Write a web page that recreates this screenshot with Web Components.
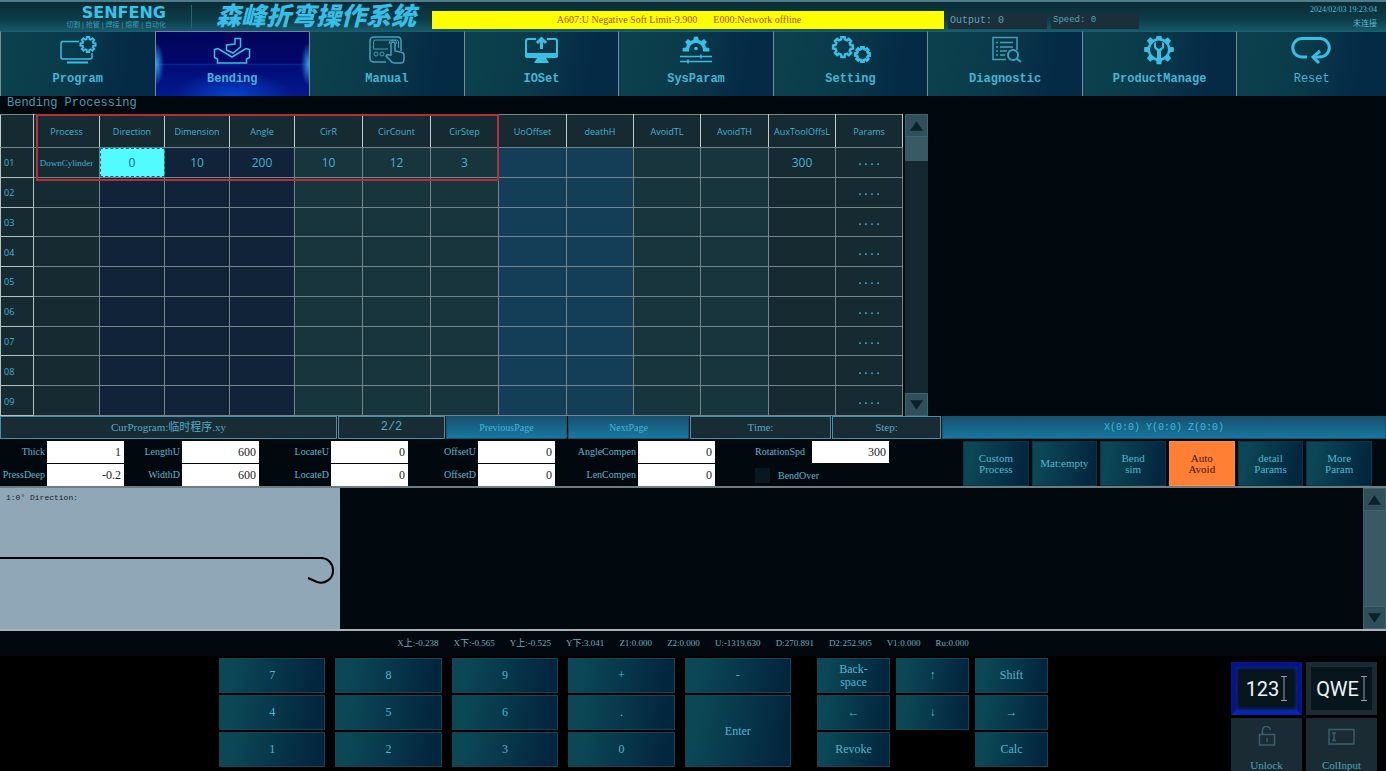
<!DOCTYPE html>
<html lang="en">
<head>
<meta charset="utf-8">
<title>Bending Processing</title>
<style>
    body {
        margin: 0;
        background: #02090e;
        color: #45a9c9;
        font-family: "Liberation Serif", "Noto Sans CJK SC", serif;
    }
</style>
</head>
<body>

<bending-app></bending-app>

<script>
// outline of a gear with n teeth, as svg path data
function gear(cx, cy, inner, outer, n) {
    const step = Math.PI * 2 / n;
    const points = [];

    for (let i = 0; i < n; i++) {
        const a = i * step - Math.PI / 2;
        [[-0.32, inner], [-0.2, outer], [0.2, outer], [0.32, inner]].forEach(([t, r]) => {
            points.push((cx + r * Math.cos(a + t * step)).toFixed(2) + ' ' + (cy + r * Math.sin(a + t * step)).toFixed(2));
        });
    }

    return 'M' + points.join('L') + 'Z';
}

const icons = {
    program: `
        <path d="M22 5.5H6q-2 0-2 2V21q0 2 2 2h27q2 0 2-2v-4"/>
        <path d="M10 26.5h21" stroke-width="2"/>
        <path d="${gear(31, 8.5, 5.6, 7.6, 8)}" stroke-width="2"/>`,
    bending: `
        <path d="M2.5 13.5L6 12.5L20 21L34 12.5L37.5 13.5V21.5L34.5 23V27H5.5V23L2.5 21.5Z"/>
        <path d="M23 2.5H28.5V11L21 17L14.5 14V9L23 8Z"/>`,
    manual: `
        <path d="M20 26H8q-4 0-4-4V5q0-4 4-4h24q3 0 3 4v10"/>
        <path d="M22 13H7.500V6q0-2 2-2h21q2 0 2 2v6" stroke-width="1"/>
        <circle cx="10" cy="18" r="2" stroke-width="1"/><circle cx="16" cy="18" r="2" stroke-width="1"/>
        <path d="M25 19V8a2 2 0 0 1 4 0v7l7 1.500q2 .5 2 3V23q0 4-3 4h-7q-2 0-4-3l-4-4q1-2 3-1z"/>
        <path d="M23 8a4 4 0 0 1 8 0" stroke-width="1"/>`,
    ioset: `
        <path d="M15 3H7q-2 0-2 2v15h31V5q0-2-2-2h-8" stroke-width="2"/>
        <path d="M4 17h33v3q0 2-2 2H25l3 5H13l3-5H6q-2 0-2-2z" fill="currentColor" stroke="none"/>
        <path d="M20.500 13V4M16 7l4.500-4.500L25 7" stroke-width="3"/>`,
    sysparam: `
        <clipPath id="half"><path d="M0 0H40V15.500H0Z"/></clipPath>
        <path d="${gear(20, 14, 10.5, 13.5, 8)}M27 14a7 7 0 1 0-14 0a7 7 0 1 0 14 0Z" fill="currentColor" stroke="none" fill-rule="evenodd" clip-path="url(#half)"/>
        <circle cx="20" cy="12.500" r="1.800" fill="currentColor" stroke="none"/>
        <path d="M4 20.500H36M4 25.500H36M25 18.500v4M12 23.500v4"/>`,
    setting: `
        <path d="${gear(13, 11, 7.8, 10, 8)}" stroke-width="2.500"/>
        <path d="${gear(32.5, 18.5, 5.6, 7.4, 8)}" stroke-width="2.500"/>`,
    diagnostic: `
        <path d="M21 23.500H8V1.500H32V14"/>
        <path d="M15 6.500h13M15 11h13M15 15h7M15 19h5M11 6.500h2M11 11h2M11 15h2M11 19h2"/>
        <circle cx="28" cy="19" r="5" stroke-width="2"/><path d="M31.500 22.500L36 26" stroke-width="2"/>`,
    product: `
        <path d="${gear(20, 13.5, 11.5, 15, 8)}M29 13.500a9 9 0 1 0-18 0a9 9 0 1 0 18 0Z" fill="currentColor" stroke="none" fill-rule="evenodd"/>
        <path d="M15 7v5l3 3v12h4V15l3-3V7l-2-1v5l-3 2-3-2V6z" fill="currentColor" stroke="none"/>`,
    reset: `
        <path d="M16 21H11A9 9 0 0 1 11 2.500H29A9 9 0 0 1 29 21H22" stroke-width="3"/>
        <path d="M29 15L22 21L28 27" stroke-width="3"/>`
};

class BendingApp extends HTMLElement {

    constructor() {
        super();
        this.shadow = this.attachShadow({ mode: 'open' });
    }

    connectedCallback() {
        this.render();
    }

    render() {
        this.shadow.innerHTML =
        `
        <style>
            :host {
                display: flex;
                flex-direction: column;
                height: 100vh;
                overflow: hidden;
            }

            h1 {
                margin: 0;
                padding: 0 7px;
                font: 12px/14px "Liberation Mono", monospace;
                height: 18px;
                color: #5098ae;
            }

            .preview {
                flex: 1;
                min-height: 0;
            }
        </style>

        <top-bar></top-bar>
        <main-nav></main-nav>
        <h1>Bending Processing</h1>
        <process-table></process-table>
        <program-bar></program-bar>
        <param-panel></param-panel>
        <bend-preview class="preview"></bend-preview>
        <axis-bar></axis-bar>
        <key-pad></key-pad>
        `;
    }
}

class TopBar extends HTMLElement {

    constructor() {
        super();
        this.shadow = this.attachShadow({ mode: 'open' });
    }

    connectedCallback() {
        this.render();
    }

    render() {
        this.shadow.innerHTML =
        `
        <style>
            :host {
                display: grid;
                grid-template-columns: 192fr 240fr 512fr 103fr 92fr 247fr;
                box-sizing: border-box;
                height: 31px;
                border-top: 2px solid #507d8b;
                background: linear-gradient(#0a2b35, #0b3c48 60%, #17596a);
            }

            .brand {
                display: flex;
                flex-direction: column;
                align-items: flex-end;
                margin: 3px 0 2px;
                padding-right: 25px;
                border-right: 1px solid #276473;
                color: #38c4e8;
            }

            .brand b {
                font: bold 16px/16px "DejaVu Sans", sans-serif;
            }

            .brand small {
                font: 7px/8px "Liberation Sans", "Noto Sans CJK SC", sans-serif;
                color: #3c9db6;
                white-space: nowrap;
            }

            .system {
                padding-left: 24px;
                font: italic 900 25px/29px "Liberation Sans", "Noto Sans CJK SC", sans-serif;
                color: #36bfe6;
                white-space: nowrap;
            }

            .alarm {
                display: flex;
                justify-content: center;
                gap: 16px;
                margin: 9px 0 2px;
                padding-right: 18px;
                background: #ff0;
                color: #a94c12;
                font-size: 10px;
                line-height: 18px;
            }

            .meter {
                margin: 11px 0 2px 4px;
                padding-left: 2px;
                background: #1a2f39;
                font: 10px/15px "Liberation Mono", monospace;
                color: #5ba5b9;
            }

            .meter.small {
                font-size: 9px;
            }

            .clock {
                padding: 1px 9px 0;
                text-align: right;
                font-size: 8px;
                line-height: 14px;
                color: #5eb8cf;
            }
        </style>

        <div class="brand"><b>SENFENG</b><small>切割 | 抢管 | 焊接 | 熔覆 | 自动化</small></div>
        <div class="system">森峰折弯操作系统</div>
        <div class="alarm"><span>A607:U Negative Soft Limit-9.900</span><span>E000:Network offline</span></div>
        <div class="meter">Output: 0</div>
        <div class="meter small">Speed: 0</div>
        <div class="clock">2024/02/03 19:23:04<br>未连接</div>
        `;
    }
}

class MainNav extends HTMLElement {

    constructor() {
        super();
        this.shadow = this.attachShadow({ mode: 'open' });
    }

    connectedCallback() {
        this.render();
    }

    render() {
        this.shadow.innerHTML =
        `
        <style>
            :host {
                display: block;
            }

            nav {
                display: grid;
                grid-template-columns: repeat(8, 154fr) 149fr;
            }
        </style>

        <nav>
            <nav-item icon="program">Program</nav-item>
            <nav-item icon="bending" active>Bending</nav-item>
            <nav-item icon="manual">Manual</nav-item>
            <nav-item icon="ioset">IOSet</nav-item>
            <nav-item icon="sysparam">SysParam</nav-item>
            <nav-item icon="setting">Setting</nav-item>
            <nav-item icon="diagnostic">Diagnostic</nav-item>
            <nav-item icon="product">ProductManage</nav-item>
            <nav-item icon="reset" plain>Reset</nav-item>
        </nav>
        `;
    }
}

class NavItem extends HTMLElement {

    constructor() {
        super();
        this.shadow = this.attachShadow({ mode: 'open' });
    }

    connectedCallback() {
        this.render();
    }

    render() {
        this.shadow.innerHTML =
        `
        <style>
            :host {
                display: block;
                min-width: 0;
            }

            button {
                display: flex;
                flex-direction: column;
                align-items: center;
                gap: 6px;
                box-sizing: border-box;
                width: 100%;
                height: 65px;
                margin: 0;
                padding: 4px 0 0;
                border: 0;
                border-top: 1px solid #176071;
                border-left: 1px solid #718f95;
                background: linear-gradient(100deg, #0b404c 10%, #0a3a4a 45%, #052a46 80%);
                color: #38c0e4;
                font: bold 12px/16px "Liberation Mono", monospace;
            }

            :host([plain]) button {
                font-weight: normal;
            }

            :host([active]) button {
                border-top-color: #6d7fa8;
                background:
                    radial-gradient(ellipse 8px 22px at 0 50%, #34a4f0, transparent),
                    radial-gradient(ellipse 8px 22px at 100% 50%, #34a4f0, transparent),
                    radial-gradient(ellipse 60px 24px at 50% 100%, #0743cf, transparent),
                    linear-gradient(#02055a, #03066c 49%, #0a2a94 50%, #020d78 53%, #03198c);
            }

            svg {
                width: 41px;
                height: 29px;
                fill: none;
                stroke: currentColor;
            }

            :host([icon="manual"]) svg,
            :host([icon="diagnostic"]) svg {
                color: #419fbb;
            }

            span {
                color: #46b4d2;
            }
        </style>

        <button type="button">
            <svg viewBox="0 0 41 29" stroke-width="1.5" aria-hidden="true">${icons[this.getAttribute('icon')]}</svg>
            <span><slot></slot></span>
        </button>
        `;
    }
}

class ScrollRail extends HTMLElement {

    constructor() {
        super();
        this.shadow = this.attachShadow({ mode: 'open' });
    }

    connectedCallback() {
        this.render();
    }

    render() {
        this.shadow.innerHTML =
        `
        <style>
            :host {
                display: flex;
                flex-direction: column;
                width: 23px;
                background: #15282f;
            }

            button {
                height: 23px;
                margin: 0;
                padding: 0;
                border: 1px solid #3b6570;
                background: #2f4f5a;
                line-height: 0;
            }

            svg {
                width: 13px;
                height: 10px;
                fill: #0d2129;
            }

            .track {
                flex: 1;
            }

            .thumb {
                height: 24px;
                background: #395a64;
            }

            :host([full]) .thumb {
                height: 100%;
            }
        </style>

        <button type="button" aria-label="Up"><svg viewBox="0 0 15 11"><path d="M7.500 0L15 11H0Z"/></svg></button>
        <div class="track"><div class="thumb"></div></div>
        <button type="button" aria-label="Down"><svg viewBox="0 0 15 11"><path d="M7.500 11L15 0H0Z"/></svg></button>
        `;
    }
}

class ProcessTable extends HTMLElement {

    constructor() {
        super();
        this.shadow = this.attachShadow({ mode: 'open' });
        this.columns = ['Process', 'Direction', 'Dimension', 'Angle', 'CirR', 'CirCount', 'CirStep', 'UoOffset', 'deathH', 'AvoidTL', 'AvoidTH', 'AuxToolOffsL', 'Params'];
        this.widths = [33, 66, 65, 65, 65, 68, 68, 68, 68, 67, 67, 68, 67, 67];
        this.tones = ['', 'navy', 'navy', 'navy', 'teal', 'teal', 'teal', 'blue', 'blue', 'teal', 'teal', '', 'more'];
        this.first = ['DownCylinder', '0', '10', '200', '10', '12', '3', '', '', '', '', '300', '....'];
    }

    connectedCallback() {
        this.render();
    }

    row(index) {
        const cells = this.tones.map((tone, i) => {
            const text = index === 1 ? this.first[i] : (i === 12 ? '....' : '');
            const name = [tone, i === 0 ? 'process' : '', index === 1 && i === 1 ? 'selected' : ''].join(' ').trim();
            return `<td class="${name}">${text}</td>`;
        });

        return `<tr><th scope="row">0${index}</th>${cells.join('')}</tr>`;
    }

    render() {
        this.shadow.innerHTML =
        `
        <style>
            :host {
                display: grid;
                grid-template-columns: 928fr 458fr;
            }

            .pane {
                display: flex;
                gap: 2px;
            }

            .grid {
                position: relative;
                flex: 1;
            }

            table {
                width: 100%;
                height: 302px;
                table-layout: fixed;
                border-collapse: collapse;
                font: 12px/14px "Open Sans", "Noto Sans", sans-serif;
                color: #45b1d5;
            }

            th, td {
                padding: 2px 0 0;
                border: 1px solid #75868a;
                background: #152a31;
                text-align: center;
                white-space: nowrap;
            }

            thead th {
                height: 30px;
                border-left-color: #c3cccd;
                border-right-color: #c3cccd;
                font-size: 9px;
                font-weight: normal;
            }

            tbody th {
                padding-left: 3px;
                border-color: #b5c0c1;
                font-size: 9px;
                font-weight: normal;
                text-align: left;
            }

            .navy { background: #102338; }
            .teal { background: #18343d; }
            .blue { background: #143e58; }

            .process {
                font: 9px/12px "Liberation Serif", serif;
            }

            .more {
                font: bold 10px/12px "Liberation Mono", monospace;
            }

            .selected {
                background: #52fbff;
                outline: 1px dashed #1e5a70;
                outline-offset: -1px;
                color: #1b5fae;
            }

            .mark {
                position: absolute;
                top: 0;
                left: 4%;
                box-sizing: border-box;
                width: 51.3%;
                height: 67px;
                border: 2px solid #b3303b;
                pointer-events: none;
            }
        </style>

        <div class="pane">
            <div class="grid">
                <table>
                    <colgroup>${this.widths.map(width => `<col style="width: ${width}px">`).join('')}</colgroup>
                    <thead>
                        <tr><th></th>${this.columns.map(name => `<th scope="col">${name}</th>`).join('')}</tr>
                    </thead>
                    <tbody>${[1, 2, 3, 4, 5, 6, 7, 8, 9].map(index => this.row(index)).join('')}</tbody>
                </table>
                <div class="mark"></div>
            </div>
            <scroll-rail></scroll-rail>
        </div>
        `;
    }
}

class ProgramBar extends HTMLElement {

    constructor() {
        super();
        this.shadow = this.attachShadow({ mode: 'open' });
    }

    connectedCallback() {
        this.render();
    }

    render() {
        this.shadow.innerHTML =
        `
        <style>
            :host {
                display: grid;
                grid-template-columns: 337fr 107fr 121fr 121fr 141fr 109fr 444fr;
                gap: 1px;
                height: 23px;
                font-size: 11px;
                line-height: 21px;
                text-align: center;
                color: #55aac4;
            }

            div {
                border: 1px solid #4591a5;
                background: #182c35;
            }

            button, output {
                margin: 0;
                padding: 0;
                border: 1px solid #17516b;
                background: linear-gradient(#175170, #1878a0);
                font: inherit;
                color: #43b5df;
            }

            button {
                font-size: 10px;
            }

            .page, output {
                font-size: 12px;
                font-family: "Liberation Mono", monospace;
            }

            output {
                font-size: 10px;
            }
        </style>

        <div>CurProgram:临时程序.xy</div>
        <div class="page">2/2</div>
        <button type="button">PreviousPage</button>
        <button type="button">NextPage</button>
        <div>Time:</div>
        <div>Step:</div>
        <output>X(0:0) Y(0:0) Z(0:0)</output>
        `;
    }
}

class ParamField extends HTMLElement {

    constructor() {
        super();
        this.shadow = this.attachShadow({ mode: 'open' });
    }

    connectedCallback() {
        this.render();
    }

    render() {
        this.shadow.innerHTML =
        `
        <style>
            :host {
                display: flex;
                align-items: center;
                min-width: 0;
            }

            label {
                flex: 1;
                min-width: 0;
                padding-right: 2px;
                overflow: hidden;
                text-align: right;
                white-space: nowrap;
                font-size: 10px;
                line-height: 16px;
                color: #5db4cf;
            }

            :host([spaced]) label {
                padding-right: 7px;
            }

            input {
                box-sizing: border-box;
                width: 77px;
                height: 22px;
                padding: 0 3px;
                border: 0;
                border-radius: 0;
                background: #fff;
                color: #222;
                font: 12px/16px "Liberation Serif", serif;
                text-align: right;
            }
        </style>

        <label for="value">${this.getAttribute('label')}</label>
        <input id="value" type="text" value="${this.getAttribute('value')}">
        `;
    }
}

class ParamPanel extends HTMLElement {

    constructor() {
        super();
        this.shadow = this.attachShadow({ mode: 'open' });
    }

    connectedCallback() {
        this.render();
    }

    render() {
        this.shadow.innerHTML =
        `
        <style>
            :host {
                display: grid;
                grid-template-columns: 889fr 74fr 409fr 14fr;
                padding-top: 2px;
                border-bottom: 2px solid #707d80;
            }

            .fields {
                display: grid;
                grid-template-columns: 124fr 135fr 149fr 147fr 160fr 174fr;
                gap: 1px 0;
            }

            .check {
                display: flex;
                align-items: center;
                gap: 8px;
                padding-left: 40px;
                font-size: 10px;
                color: #5db4cf;
            }

            .check input {
                appearance: none;
                width: 15px;
                height: 15px;
                margin: 0;
                background: #081820;
            }

            .actions {
                grid-column: 3;
                display: grid;
                grid-template-columns: repeat(6, 1fr);
                gap: 3px;
            }
        </style>

        <div class="fields">
            <param-field label="Thick" value="1"></param-field>
            <param-field label="LengthU" value="600"></param-field>
            <param-field label="LocateU" value="0"></param-field>
            <param-field label="OffsetU" value="0"></param-field>
            <param-field label="AngleCompen" value="0"></param-field>
            <param-field label="RotationSpd" value="300" spaced></param-field>
            <param-field label="PressDeep" value="-0.2"></param-field>
            <param-field label="WidthD" value="600"></param-field>
            <param-field label="LocateD" value="0"></param-field>
            <param-field label="OffsetD" value="0"></param-field>
            <param-field label="LenCompen" value="0"></param-field>
            <div class="check"><input id="over" type="checkbox"><label for="over">BendOver</label></div>
        </div>
        <div class="actions">
            <key-button small>Custom<br>Process</key-button>
            <key-button small>Mat:empty</key-button>
            <key-button small>Bend<br>sim</key-button>
            <key-button small warm>Auto<br>Avoid</key-button>
            <key-button small>detail<br>Params</key-button>
            <key-button small>More<br>Param</key-button>
        </div>
        `;
    }
}

class KeyButton extends HTMLElement {

    constructor() {
        super();
        this.shadow = this.attachShadow({ mode: 'open' });
    }

    connectedCallback() {
        this.render();
    }

    render() {
        this.shadow.innerHTML =
        `
        <style>
            :host {
                display: grid;
                min-width: 0;
            }

            button {
                margin: 0;
                padding: 0;
                border: 1px solid #174453;
                background: linear-gradient(100deg, #0b4755 15%, #03263f 90%);
                color: #55b5cf;
                font: 12px/13px "Liberation Serif", serif;
            }

            :host([small]) button {
                border-color: #0c3442;
                font-size: 11px;
                line-height: 11px;
            }

            :host([warm]) button {
                border-color: #ff8a45;
                background: #ff7f35;
                color: #431809;
            }
        </style>

        <button type="button"><slot></slot></button>
        `;
    }
}

class BendPreview extends HTMLElement {

    constructor() {
        super();
        this.shadow = this.attachShadow({ mode: 'open' });
    }

    connectedCallback() {
        this.render();
    }

    render() {
        this.shadow.innerHTML =
        `
        <style>
            :host {
                display: grid;
                grid-template-columns: 340fr 1023fr 23px;
            }

            figure {
                display: flex;
                flex-direction: column;
                min-height: 0;
                margin: 0;
                background: #8fa7b7;
            }

            figcaption {
                padding: 4px 6px 0;
                font: 8px/12px "Liberation Mono", monospace;
                color: #18242c;
            }

            svg {
                flex: 1;
                width: 100%;
                min-height: 0;
            }
        </style>

        <figure>
            <figcaption>1:0° Direction:</figcaption>
            <svg viewBox="0 0 340 125" preserveAspectRatio="xMinYMin meet" fill="none" stroke="#000" stroke-width="2" aria-hidden="true">
                <path d="M0 54H321A12 12 0 0 1 333 66.500A12 12 0 0 1 317 78L308 74"/>
            </svg>
        </figure>
        <div></div>
        <scroll-rail full></scroll-rail>
        `;
    }
}

class AxisBar extends HTMLElement {

    constructor() {
        super();
        this.shadow = this.attachShadow({ mode: 'open' });
        this.axes = ['X上:-0.238', 'X下:-0.565', 'Y上:-0.525', 'Y下:3.041', 'Z1:0.000', 'Z2:0.000', 'U:-1319.630', 'D:270.891', 'D2:252.905', 'V1:0.000', 'Ru:0.000'];
    }

    connectedCallback() {
        this.render();
    }

    render() {
        this.shadow.innerHTML =
        `
        <style>
            :host {
                display: flex;
                justify-content: center;
                gap: 15px;
                box-sizing: border-box;
                height: 27px;
                padding-right: 20px;
                border-top: 2px solid #a9b2b4;
                font-size: 9px;
                line-height: 24px;
                color: #68aec2;
            }
        </style>

        ${this.axes.map(axis => `<span>${axis}</span>`).join('')}
        `;
    }
}

class KeyPad extends HTMLElement {

    constructor() {
        super();
        this.shadow = this.attachShadow({ mode: 'open' });
    }

    connectedCallback() {
        this.render();
    }

    render() {
        this.shadow.innerHTML =
        `
        <style>
            :host {
                display: grid;
                grid-template-columns: 219fr 572fr 26fr 231fr 183fr 146fr 9fr;
                height: 115px;
                overflow: hidden;
                background: #000;
            }

            .keys {
                display: grid;
                grid-auto-rows: 35px;
                gap: 2px 10px;
                padding-top: 2px;
            }

            .numbers {
                grid-column: 2;
                grid-template-columns: repeat(5, 1fr);
            }

            .edit {
                grid-column: 4;
                grid-template-columns: repeat(3, 1fr);
                column-gap: 6px;
            }

            .enter {
                grid-row: span 2;
            }

            .calc {
                grid-column: 3;
            }

            .modes {
                grid-column: 6;
                display: grid;
                grid-template-columns: 1fr 1fr;
                grid-auto-rows: 53px 60px;
                gap: 3px 4px;
                padding-top: 6px;
            }
        </style>

        <div class="keys numbers">
            <key-button>7</key-button>
            <key-button>8</key-button>
            <key-button>9</key-button>
            <key-button>+</key-button>
            <key-button>-</key-button>
            <key-button>4</key-button>
            <key-button>5</key-button>
            <key-button>6</key-button>
            <key-button>.</key-button>
            <key-button class="enter">Enter</key-button>
            <key-button>1</key-button>
            <key-button>2</key-button>
            <key-button>3</key-button>
            <key-button>0</key-button>
        </div>
        <div class="keys edit">
            <key-button>Back-<br>space</key-button>
            <key-button>↑</key-button>
            <key-button>Shift</key-button>
            <key-button>←</key-button>
            <key-button>↓</key-button>
            <key-button>→</key-button>
            <key-button>Revoke</key-button>
            <key-button class="calc">Calc</key-button>
        </div>
        <div class="modes">
            <mode-button active>123<svg slot="icon" width="6" height="25" fill="none" stroke="#8fa3ac"><path d="M0 .5H6M3 1V24M0 24.500H6"/></svg></mode-button>
            <mode-button>QWE<svg slot="icon" width="6" height="25" fill="none" stroke="#8fa3ac"><path d="M0 .5H6M3 1V24M0 24.500H6"/></svg></mode-button>
            <mode-button caption>Unlock<svg slot="icon" width="18" height="20" fill="none" stroke="#3a5e6a"><path d="M1.500 8.500H16.500V19H1.500ZM4.500 8V5a4 4 0 0 1 8-1M9 12v4" stroke-width="1.5"/></svg></mode-button>
            <mode-button caption>ColInput<svg slot="icon" width="27" height="20" fill="none" stroke="#3a5e6a"><path d="M1 3.500H26V18H1ZM4 7H8M6 7V14M4 14.500H8" stroke-width="1.5"/></svg></mode-button>
        </div>
        `;
    }
}

class ModeButton extends HTMLElement {

    constructor() {
        super();
        this.shadow = this.attachShadow({ mode: 'open' });
    }

    connectedCallback() {
        this.render();
    }

    render() {
        this.shadow.innerHTML =
        `
        <style>
            :host {
                display: grid;
                min-width: 0;
            }

            button {
                display: flex;
                align-items: center;
                justify-content: center;
                gap: 2px;
                margin: 0;
                padding: 0;
                border: 5px solid #1c2a33;
                background: #07151d;
                color: #eef4f6;
                font: 20px/24px Roboto, sans-serif;
            }

            :host([active]) button {
                border-color: #06148c;
                border-bottom-color: #0a24ae;
                background:
                    radial-gradient(ellipse 6px 16px at 0 50%, #4a9cf5, transparent) border-box,
                    radial-gradient(ellipse 6px 16px at 100% 50%, #4a9cf5, transparent) border-box,
                    #07151d;
                box-shadow: inset 0 0 4px #0a35c8;
            }

            :host([caption]) button {
                flex-direction: column-reverse;
                justify-content: flex-end;
                gap: 11px;
                padding-top: 3px;
                background: #1a2b34;
                border-color: #1a2b34;
                color: #4ea4bd;
                font: 11px/16px "Liberation Serif", serif;
            }
        </style>

        <button type="button"><span><slot></slot></span><slot name="icon"></slot></button>
        `;
    }
}

customElements.define('key-button', KeyButton);
customElements.define('mode-button', ModeButton);
customElements.define('scroll-rail', ScrollRail);
customElements.define('nav-item', NavItem);
customElements.define('param-field', ParamField);
customElements.define('top-bar', TopBar);
customElements.define('main-nav', MainNav);
customElements.define('process-table', ProcessTable);
customElements.define('program-bar', ProgramBar);
customElements.define('param-panel', ParamPanel);
customElements.define('bend-preview', BendPreview);
customElements.define('axis-bar', AxisBar);
customElements.define('key-pad', KeyPad);
customElements.define('bending-app', BendingApp);
</script>
</body>
</html>
